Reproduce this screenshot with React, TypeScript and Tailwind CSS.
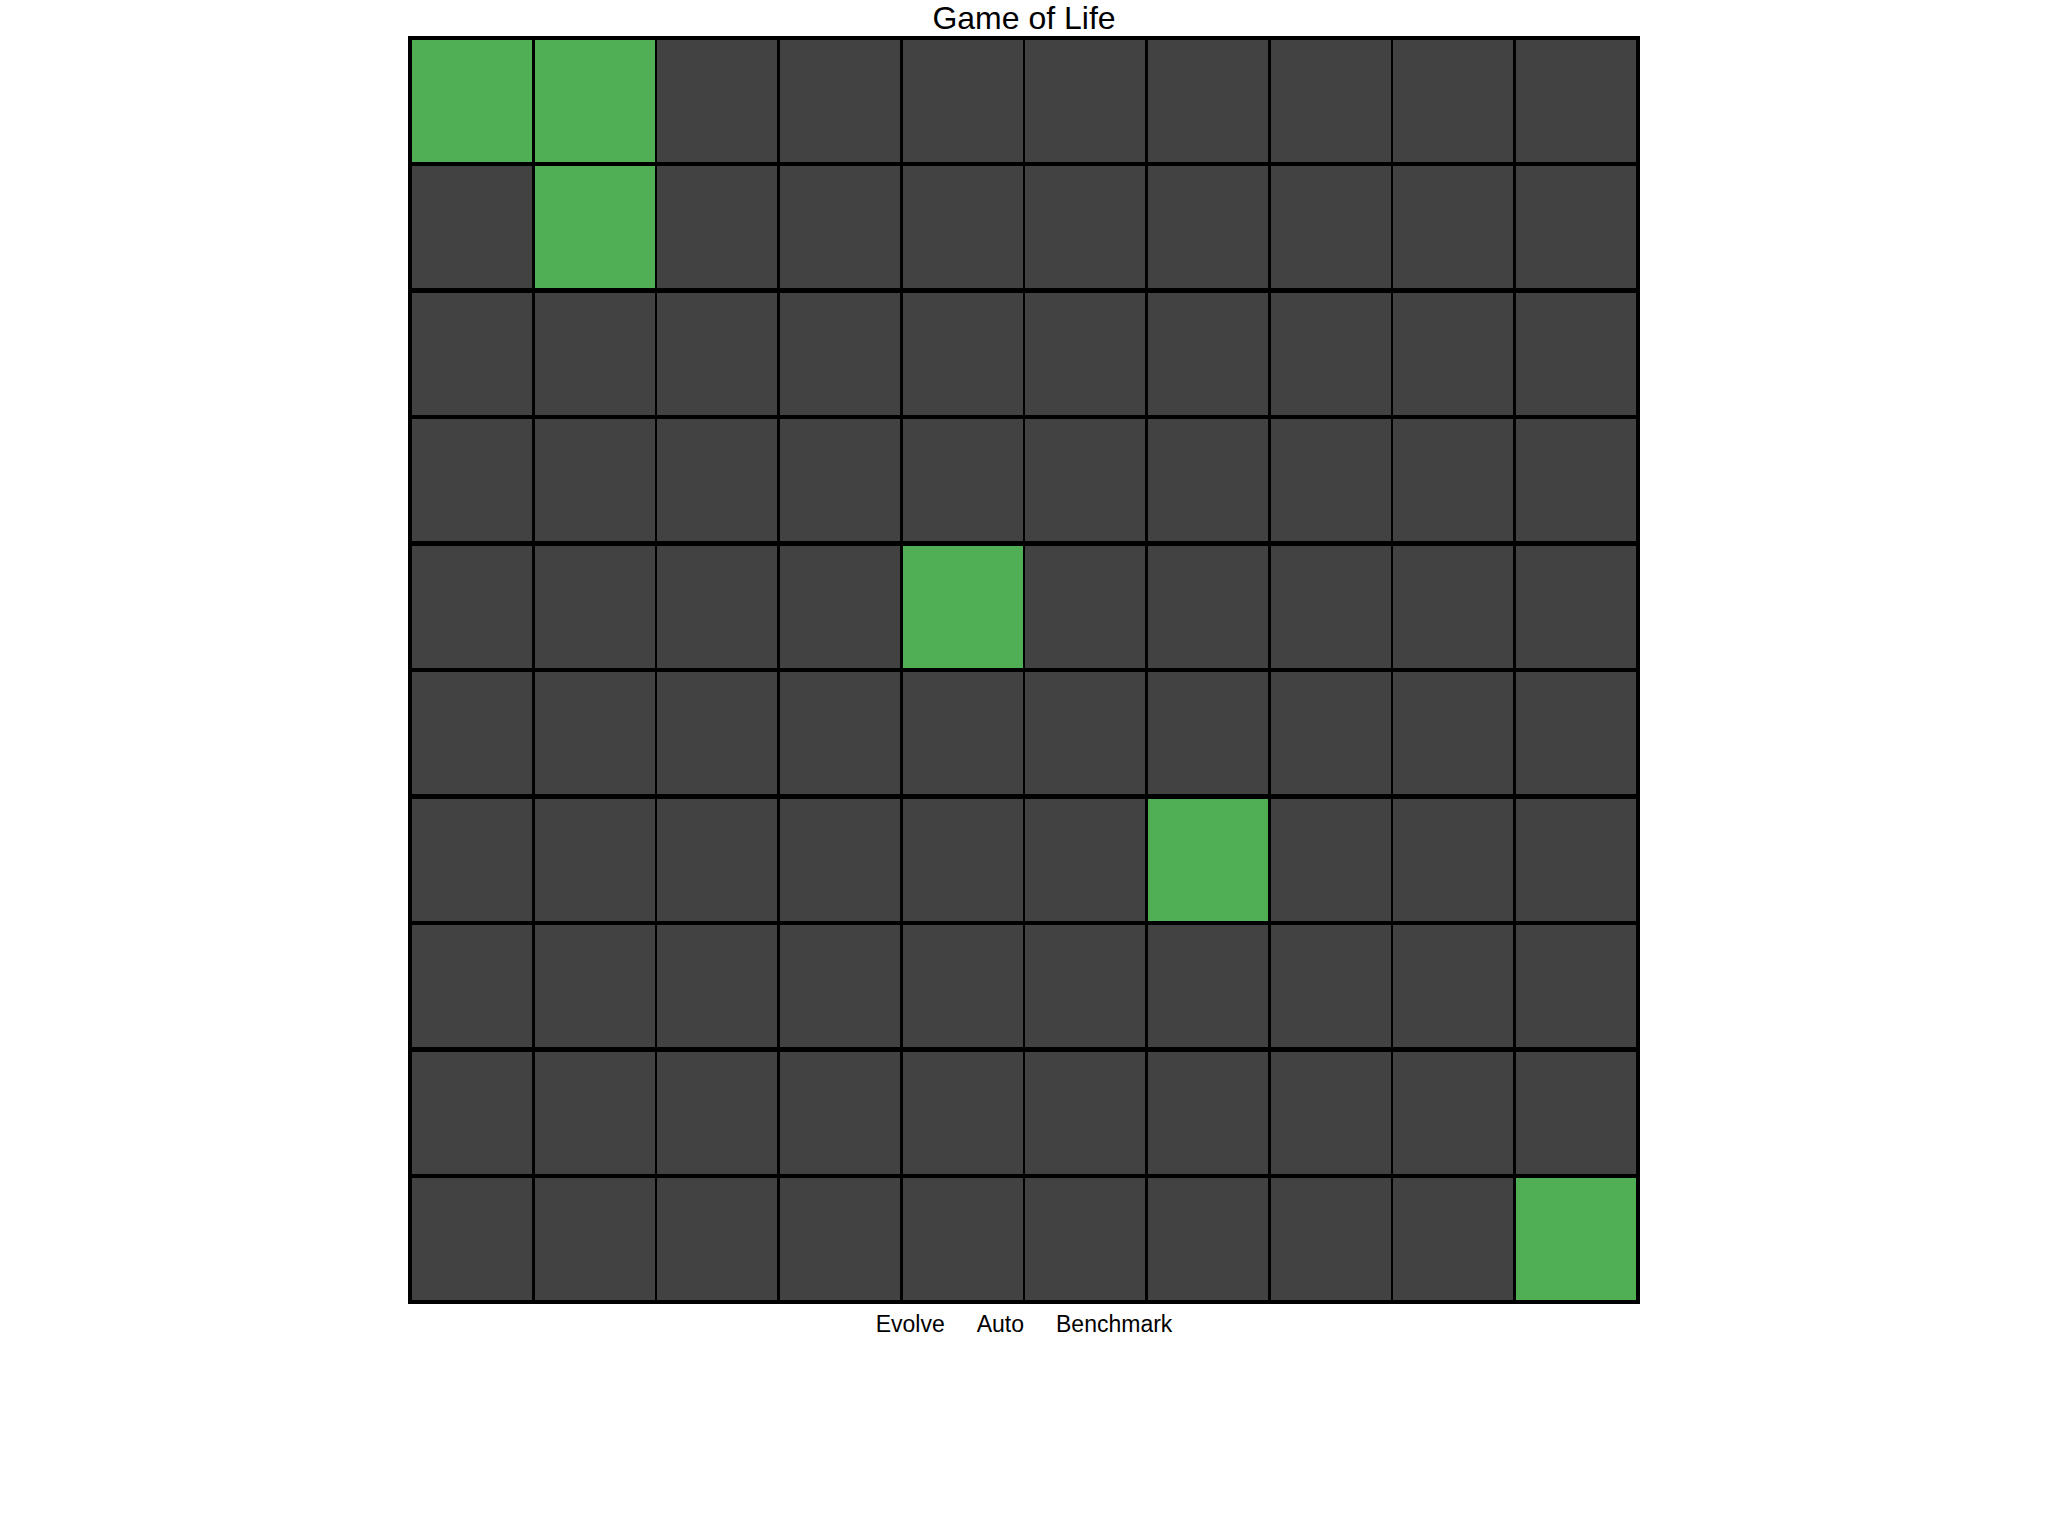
import { useState } from "react";

const SIZE = 10;

// live cells at start: [row, col]
const START: [number, number][] = [
  [0, 0],
  [0, 1],
  [1, 1],
  [4, 4],
  [6, 6],
  [9, 9],
];

function makeBoard(): boolean[][] {
  const b = Array.from({ length: SIZE }, () => Array(SIZE).fill(false));
  for (const [r, c] of START) b[r][c] = true;
  return b;
}

function step(b: boolean[][]): boolean[][] {
  return b.map((row, r) =>
    row.map((alive, c) => {
      let n = 0;
      for (let dr = -1; dr <= 1; dr++)
        for (let dc = -1; dc <= 1; dc++) {
          if (!dr && !dc) continue;
          if (b[r + dr]?.[c + dc]) n++;
        }
      return alive ? n === 2 || n === 3 : n === 3;
    })
  );
}

export default function App() {
  const [board, setBoard] = useState(makeBoard);

  const toggle = (r: number, c: number) =>
    setBoard((b) => b.map((row, i) => row.map((v, j) => (i === r && j === c ? !v : v))));

  return (
    <div className="flex min-h-screen flex-col items-center bg-white font-['Liberation_Sans',Arial,sans-serif] text-black">
      <h1 className="text-[32px] leading-[36px]">Game of Life</h1>

      <div className="grid grid-cols-[repeat(10,120px)] grid-rows-[repeat(10,122px)] gap-x-[2.667px] gap-y-[4.444px] bg-black p-[4px]">
        {board.map((row, r) =>
          row.map((alive, c) => (
            <div
              key={`${r}-${c}`}
              onClick={() => toggle(r, c)}
              className={alive ? "bg-[#50ae55]" : "bg-[#424242]"}
            />
          ))
        )}
      </div>

      <div className="mt-[7px] flex items-center justify-center text-[23px] leading-[26px]">
        <button className="px-[16px]" onClick={() => setBoard(step)}>
          Evolve
        </button>
        <button className="px-[16px]">Auto</button>
        <button className="px-[16px]">Benchmark</button>
      </div>
    </div>
  );
}
